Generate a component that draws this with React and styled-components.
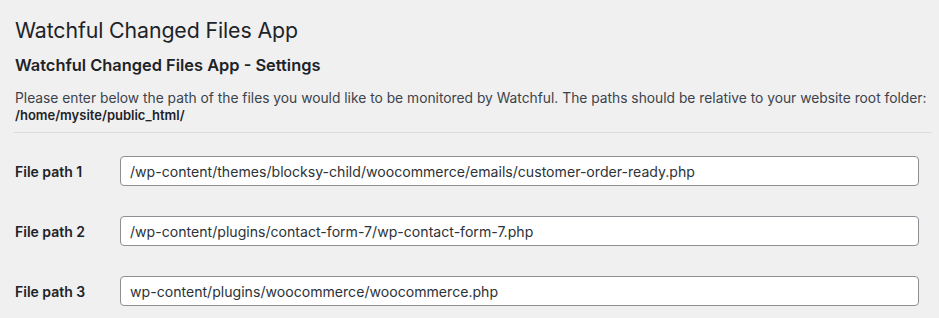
import React from "react";
import styled, { createGlobalStyle } from "styled-components";

const GlobalStyle = createGlobalStyle`
  html, body {
    margin: 0;
    padding: 0;
    background: #f0f0f1;
  }
  body {
    font-family: Inter, "Noto Sans", "Liberation Sans", sans-serif;
    color: #1d2327;
  }
`;

const Wrap = styled.div`
  padding: 10px 7px 0 14px;
`;

const Title = styled.h1`
  margin: 0;
  padding: 6px 0 0 1px;
  font-size: 21.3px;
  font-weight: 400;
  line-height: 29px;
  letter-spacing: -0.1px;
`;

const Subtitle = styled.h2`
  margin: 9px 0 0 1px;
  font-size: 16.4px;
  font-weight: 600;
  line-height: 22px;
`;

const Description = styled.p`
  margin: 14px 0 0 1px;
  font-size: 13.8px;
  line-height: 17px;
  color: #3c434a;

  strong {
    color: #1d2327;
    font-size: 13px;
    font-weight: 600;
  }
`;

const Divider = styled.hr`
  margin: 8px 0 0;
  border: 0;
  border-top: 1px solid #dcdcde;
`;

const Table = styled.div`
  display: flex;
  flex-direction: column;
  gap: 30px;
  padding: 23px 13px 0 1px;
`;

const Row = styled.div`
  display: grid;
  grid-template-columns: 105px 1fr;
  align-items: center;
`;

const Label = styled.label`
  font-size: 14px;
  font-weight: 600;
  color: #1d2327;
`;

const Input = styled.input`
  box-sizing: border-box;
  width: 100%;
  height: 30px;
  padding: 0 9px;
  border: 1px solid #8c8f94;
  border-radius: 4px;
  background: #fff;
  font-family: inherit;
  font-size: 14.1px;
  color: #2c3338;
  outline: none;
`;

const paths = [
  "/wp-content/themes/blocksy-child/woocommerce/emails/customer-order-ready.php",
  "/wp-content/plugins/contact-form-7/wp-contact-form-7.php",
  "wp-content/plugins/woocommerce/woocommerce.php",
];

export default function App() {
  return (
    <>
      <GlobalStyle />
      <Wrap>
        <Title>Watchful Changed Files App</Title>
        <Subtitle>Watchful Changed Files App - Settings</Subtitle>
        <Description>
          Please enter below the path of the files you would like to be
          monitored by Watchful. The paths should be relative to your website
          root folder:
          <br />
          <strong>/home/mysite/public_html/</strong>
        </Description>
        <Divider />
        <Table>
          {paths.map((path, index) => (
            <Row key={index}>
              <Label htmlFor={`file-path-${index + 1}`}>
                File path {index + 1}
              </Label>
              <Input
                id={`file-path-${index + 1}`}
                type="text"
                defaultValue={path}
              />
            </Row>
          ))}
        </Table>
      </Wrap>
    </>
  );
}
